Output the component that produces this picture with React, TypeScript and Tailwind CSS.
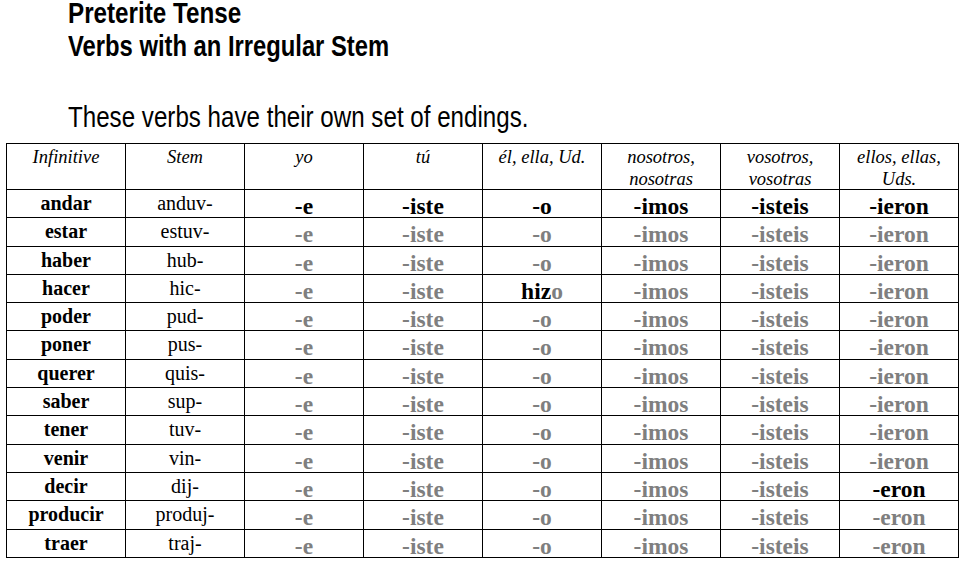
const rows: { inf: string; stem: string; endings: string[]; bold?: boolean }[] = [
  { inf: 'andar', stem: 'anduv-', endings: ['-e', '-iste', '-o', '-imos', '-isteis', '-ieron'], bold: true },
  { inf: 'estar', stem: 'estuv-', endings: ['-e', '-iste', '-o', '-imos', '-isteis', '-ieron'] },
  { inf: 'haber', stem: 'hub-', endings: ['-e', '-iste', '-o', '-imos', '-isteis', '-ieron'] },
  { inf: 'hacer', stem: 'hic-', endings: ['-e', '-iste', 'hizo', '-imos', '-isteis', '-ieron'] },
  { inf: 'poder', stem: 'pud-', endings: ['-e', '-iste', '-o', '-imos', '-isteis', '-ieron'] },
  { inf: 'poner', stem: 'pus-', endings: ['-e', '-iste', '-o', '-imos', '-isteis', '-ieron'] },
  { inf: 'querer', stem: 'quis-', endings: ['-e', '-iste', '-o', '-imos', '-isteis', '-ieron'] },
  { inf: 'saber', stem: 'sup-', endings: ['-e', '-iste', '-o', '-imos', '-isteis', '-ieron'] },
  { inf: 'tener', stem: 'tuv-', endings: ['-e', '-iste', '-o', '-imos', '-isteis', '-ieron'] },
  { inf: 'venir', stem: 'vin-', endings: ['-e', '-iste', '-o', '-imos', '-isteis', '-ieron'] },
  { inf: 'decir', stem: 'dij-', endings: ['-e', '-iste', '-o', '-imos', '-isteis', '-eron'] },
  { inf: 'producir', stem: 'produj-', endings: ['-e', '-iste', '-o', '-imos', '-isteis', '-eron'] },
  { inf: 'traer', stem: 'traj-', endings: ['-e', '-iste', '-o', '-imos', '-isteis', '-eron'] },
];

const headers = ['Infinitive', 'Stem', 'yo', 'tú', 'él, ella, Ud.', 'nosotros, nosotras', 'vosotros, vosotras', 'ellos, ellas, Uds.'];

const serif = "font-['Liberation_Serif','Times_New_Roman',serif]";

function Ending({ text, black, inf }: { text: string; black: boolean; inf: string }) {
  if (text === 'hizo') {
    return (
      <span>
        <span className="text-black">hiz</span>
        <span className="text-[#7f7f7f]">o</span>
      </span>
    );
  }
  const isBlack = black || (inf === 'decir' && text === '-eron');
  return <span className={isBlack ? 'text-black' : 'text-[#7f7f7f]'}>{text}</span>;
}

export default function App() {
  return (
    <div className="w-[971px] h-[562px] bg-white overflow-hidden">
      {/* Title (narrow sans, squeezed) */}
      <div className="pl-[68px] font-['Liberation_Sans','Arial',sans-serif] text-black">
        <div className="origin-left scale-x-[0.835] text-[29px] font-bold leading-[27px] whitespace-nowrap">
          Preterite Tense
        </div>
        <div className="origin-left scale-x-[0.82] text-[29px] font-bold leading-[33px] mt-[3px] whitespace-nowrap">
          Verbs with an Irregular Stem
        </div>
        <div className="origin-left scale-x-[0.805] text-[30px] leading-[33px] mt-[37px] whitespace-nowrap">
          These verbs have their own set of endings.
        </div>
      </div>

      {/* Table */}
      <div
        className={`ml-[6px] mt-[10px] w-[953px] grid grid-cols-[repeat(8,118px)] grid-rows-[45px_repeat(13,27.3px)] gap-px bg-black border border-black ${serif}`}
      >
        {headers.map((h) => (
          <div key={h} className="bg-white text-center italic text-[18.5px] leading-[22px] pt-[2px] px-2">
            {h}
          </div>
        ))}
        {rows.map((r) => (
          <>
            <div key={r.inf + 'i'} className="bg-white text-center font-bold text-[20px] leading-[27px]">
              {r.inf}
            </div>
            <div key={r.inf + 's'} className="bg-white text-center text-[20px] leading-[27px]">
              {r.stem}
            </div>
            {r.endings.map((e, i) => (
              <div key={r.inf + i} className="bg-white text-center font-bold text-[23.5px] leading-[22px] pt-[5px]">
                <Ending text={e} black={!!r.bold} inf={r.inf} />
              </div>
            ))}
          </>
        ))}
      </div>
    </div>
  );
}
